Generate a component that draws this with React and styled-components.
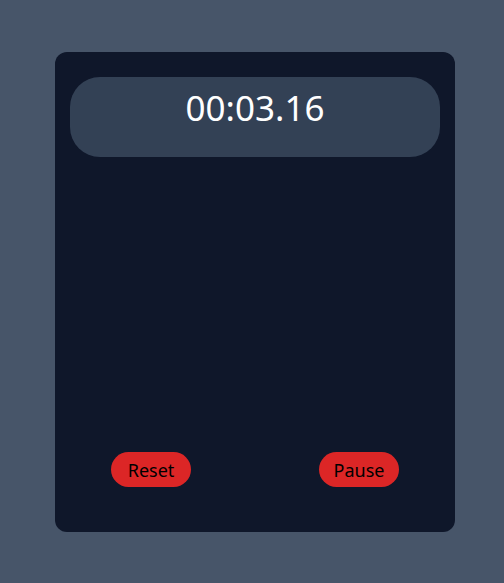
import styled, { createGlobalStyle } from 'styled-components';

const GlobalStyle = createGlobalStyle`
  html, body {
    margin: 0;
    padding: 0;
    background-color: #475569;
    font-family: "Noto Sans", "Open Sans", sans-serif;
  }
`;

const Page = styled.div`
  min-height: 583px;
  padding: 52px 0 0 55px;
  box-sizing: border-box;
`;

const Card = styled.div`
  width: 400px;
  height: 480px;
  background-color: #0f172a;
  border-radius: 12px;
  padding: 25px 15px 45px;
  box-sizing: border-box;
  display: flex;
  flex-direction: column;
  justify-content: space-between;
`;

const Display = styled.div`
  height: 80px;
  background-color: #334155;
  border-radius: 30px;
  color: #ffffff;
  font-size: 35px;
  line-height: 1;
  text-align: center;
  padding-top: 13px;
  box-sizing: border-box;
`;

const Controls = styled.div`
  display: flex;
  justify-content: space-between;
  padding: 0 41px;
`;

const Button = styled.button`
  width: 80px;
  height: 35px;
  border: none;
  border-radius: 18px;
  background-color: #dc2626;
  color: #000000;
  font-family: inherit;
  font-size: 18px;
  font-weight: 400;
  padding: 0;
  cursor: pointer;
`;

export default function App() {
  return (
    <>
      <GlobalStyle />
      <Page>
        <Card>
          <Display>00:03.16</Display>
          <Controls>
            <Button>Reset</Button>
            <Button>Pause</Button>
          </Controls>
        </Card>
      </Page>
    </>
  );
}
